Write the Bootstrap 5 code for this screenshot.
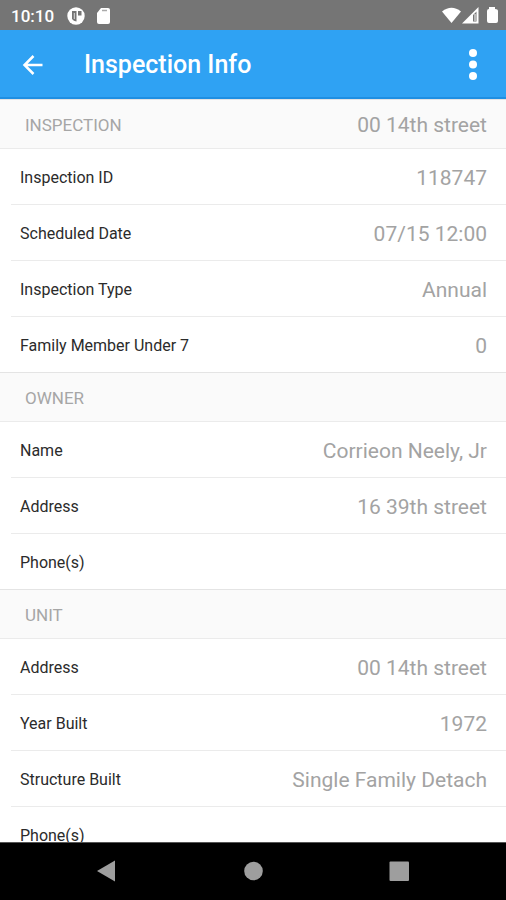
<!DOCTYPE html>
<html lang="en">
<head>
<meta charset="utf-8">
<meta name="viewport" content="width=device-width, initial-scale=1">
<title>Inspection Info</title>
<link href="https://cdn.jsdelivr.net/npm/bootstrap@5.3.0/dist/css/bootstrap.min.css" rel="stylesheet">
<style>
  body { font-family: Roboto, "Liberation Sans", sans-serif; color: #2b2b2b; }
  .status-bar { height: 30px; background: #757575; line-height: 28px; padding: 2px 8px 0 11px; }
  .clock { font-size: 17px; font-weight: 500; padding-right: 13px; }
  .app-bar { height: 69px; background: #2fa2f3; border-bottom: 2px solid #1f8fe2; padding: 2px 17px 0 16px; }
  .app-title { font-size: 25px; line-height: 32px; font-weight: 500; padding-left: 34px; }
  .icon-btn { line-height: 0; color: inherit; }
  .info-scroll { min-height: 0; scrollbar-width: none; }
  .info-scroll::-webkit-scrollbar { display: none; }
  .section-head { height: 49px; background: #fafafa; border-top: 1px solid #e4e4e4; padding: 1px 19px 0 25px; color: #a6a6a6; }
  .section-head h2 { font-size: 17px; line-height: 24px; font-weight: 400; }
  .info-row { height: 56px; margin-left: 11px; border-top: 1px solid #ebebeb; padding: 2px 19px 0 9px; }
  .section-head + .info-row { margin-left: 0; padding-left: 20px; }
  .info-label { font-size: 16px; line-height: 24px; font-weight: 400; }
  .info-value { font-size: 21px; line-height: 28px; color: #a3a3a3; }
  .nav-keys { height: 58px; background: #000; border-top: 1px solid #555; color: #9e9e9e; padding: 0 34px 2px; }
</style>
</head>
<body>
<div class="vh-100 d-flex flex-column overflow-hidden bg-white">
  <div class="status-bar d-flex flex-shrink-0 align-items-center text-white">
    <span class="clock">10:10</span>
    <svg width="18" height="18" viewBox="0 0 18 18" aria-hidden="true"><circle cx="9" cy="9" r="8.700" fill="#fff"/><path d="M5 4h4.500v10.500Q6.500 14 5 12zM11 4h3.500v4.500H11z" fill="#757575"/><path d="M7.300 6v6" stroke="#ddd" stroke-width="1"/></svg>
    <svg class="ms-2" width="20" height="18" viewBox="0 0 20 18" aria-hidden="true"><path d="M8 1h7q2 0 2 2v12q0 2-2 2H6q-2 0-2-2V6z" fill="#fff"/><path d="M9 3.500h5" stroke="#aaa" stroke-width="1.500"/></svg>
    <svg class="ms-auto" width="56" height="18" viewBox="0 0 56 18" aria-hidden="true" fill="#fff">
      <path d="M0 4.500Q9.500-3 19 4.500L9.500 16z"/>
      <path fill-rule="evenodd" d="M20 16.500 36.500 0v16.500zM31 8v6.500h3.500V4.500z"/>
      <path d="M33 7v7" stroke="#fff" stroke-width="1"/>
      <path d="M47 2V0h6v2q3 0 3 2v10q0 2-2 2h-7q-2 0-2-2V4q0-2 2-2z"/>
    </svg>
  </div>
  <header class="app-bar d-flex flex-shrink-0 align-items-center text-white">
    <button type="button" class="icon-btn btn p-0 border-0" aria-label="Back"><svg width="34" height="32" viewBox="0 0 34 32" fill="none" stroke="#fff" stroke-width="2.500"><path d="M26.500 16H9M17.500 7 8.500 16l9 9"/></svg></button>
    <h1 class="app-title m-0">Inspection Info</h1>
    <button type="button" class="icon-btn btn p-0 border-0 ms-auto" aria-label="More options"><svg width="32" height="36" viewBox="0 0 32 36" fill="#fff"><circle cx="16" cy="6" r="4"/><circle cx="16" cy="17.500" r="4"/><circle cx="16" cy="29" r="4"/></svg></button>
  </header>
  <main class="info-scroll flex-fill overflow-auto">
    <section>
      <div class="section-head d-flex align-items-center justify-content-between"><h2 class="m-0">INSPECTION</h2><span class="info-value">00 14th street</span></div>
      <div class="info-row d-flex align-items-center justify-content-between"><span class="info-label">Inspection ID</span><span class="info-value">118747</span></div>
      <div class="info-row d-flex align-items-center justify-content-between"><span class="info-label">Scheduled Date</span><span class="info-value">07/15 12:00</span></div>
      <div class="info-row d-flex align-items-center justify-content-between"><span class="info-label">Inspection Type</span><span class="info-value">Annual</span></div>
      <div class="info-row d-flex align-items-center justify-content-between"><span class="info-label">Family Member Under 7</span><span class="info-value">0</span></div>
    </section>
    <section>
      <div class="section-head d-flex align-items-center"><h2 class="m-0">OWNER</h2></div>
      <div class="info-row d-flex align-items-center justify-content-between"><span class="info-label">Name</span><span class="info-value">Corrieon Neely, Jr</span></div>
      <div class="info-row d-flex align-items-center justify-content-between"><span class="info-label">Address</span><span class="info-value">16 39th street</span></div>
      <div class="info-row d-flex align-items-center"><span class="info-label">Phone(s)</span></div>
    </section>
    <section>
      <div class="section-head d-flex align-items-center"><h2 class="m-0">UNIT</h2></div>
      <div class="info-row d-flex align-items-center justify-content-between"><span class="info-label">Address</span><span class="info-value">00 14th street</span></div>
      <div class="info-row d-flex align-items-center justify-content-between"><span class="info-label">Year Built</span><span class="info-value">1972</span></div>
      <div class="info-row d-flex align-items-center justify-content-between"><span class="info-label">Structure Built</span><span class="info-value">Single Family Detach</span></div>
      <div class="info-row d-flex align-items-center"><span class="info-label">Phone(s)</span></div>
    </section>
  </main>
  <nav class="nav-keys d-flex flex-shrink-0 align-items-center justify-content-around" aria-label="System">
    <button type="button" class="icon-btn btn p-0 border-0" aria-label="Back"><svg width="22" height="22" viewBox="0 0 22 22" fill="currentColor"><path d="M19 0.500v21L1 11z"/></svg></button>
    <button type="button" class="icon-btn btn p-0 border-0" aria-label="Home"><svg width="22" height="22" viewBox="0 0 22 22" fill="currentColor"><circle cx="11.500" cy="11" r="9.300"/></svg></button>
    <button type="button" class="icon-btn btn p-0 border-0" aria-label="Recent apps"><svg width="22" height="22" viewBox="0 0 22 22" fill="currentColor"><rect x="1.500" y="1.500" width="19.500" height="19.500" rx="1"/></svg></button>
  </nav>
</div>
<script src="https://cdn.jsdelivr.net/npm/bootstrap@5.3.0/dist/js/bootstrap.bundle.min.js"></script>
</body>
</html>
